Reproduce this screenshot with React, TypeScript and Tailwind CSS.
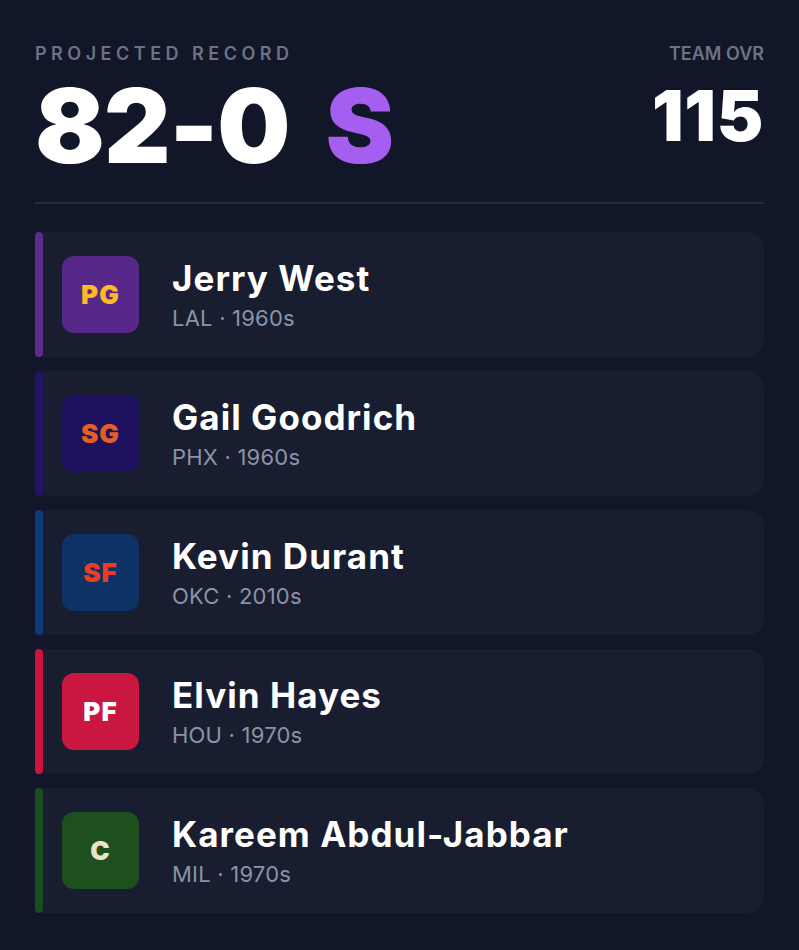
import React from 'react'

interface Player {
  pos: string
  name: string
  team: string
  era: string
  bar: string
  badgeBg: string
  badgeText: string
}

const players: Player[] = [
  { pos: 'PG', name: 'Jerry West', team: 'LAL', era: '1960s', bar: 'bg-[#5b2a8c]', badgeBg: 'bg-[#57288a]', badgeText: 'text-[#fdb927]' },
  { pos: 'SG', name: 'Gail Goodrich', team: 'PHX', era: '1960s', bar: 'bg-[#221466]', badgeBg: 'bg-[#1d1160]', badgeText: 'text-[#e56020]' },
  { pos: 'SF', name: 'Kevin Durant', team: 'OKC', era: '2010s', bar: 'bg-[#0d3a78]', badgeBg: 'bg-[#0c3266]', badgeText: 'text-[#ef3b24]' },
  { pos: 'PF', name: 'Elvin Hayes', team: 'HOU', era: '1970s', bar: 'bg-[#ce1141]', badgeBg: 'bg-[#c9173f]', badgeText: 'text-white' },
  { pos: 'C', name: 'Kareem Abdul-Jabbar', team: 'MIL', era: '1970s', bar: 'bg-[#1b4d1f]', badgeBg: 'bg-[#1e4f1f]', badgeText: 'text-[#eee1c6]' },
]

function PlayerRow({ p }: { p: Player }) {
  return (
    <div className="flex h-[125px]">
      {/* Team colour bar */}
      <div className={`w-[8px] rounded-full ${p.bar}`} />
      <div className="flex flex-1 items-center gap-[33px] rounded-r-2xl bg-[#181e30] pl-[19px]">
        <div
          className={`flex h-[77px] w-[77px] items-center justify-center rounded-xl text-[26px] font-black tracking-[0.04em] ${p.badgeBg} ${p.badgeText}`}
        >
          {p.pos}
        </div>
        <div className="flex flex-col">
          <span className="text-[35px] font-bold leading-[40px] tracking-[0.03em] text-white">{p.name}</span>
          <span className="mt-[6px] text-[22px] leading-[28px] tracking-[0.01em] text-[#8b93a7]">
            {p.team} · {p.era}
          </span>
        </div>
      </div>
    </div>
  )
}

export default function App() {
  return (
    <div className="min-h-[950px] w-[799px] bg-[#111628] px-[35px] pt-[42px] font-['Inter','Liberation_Sans',sans-serif]">
      {/* Header */}
      <div className="flex items-start justify-between">
        <div className="flex flex-col">
          <span className="text-[18px] font-semibold leading-[24px] tracking-[0.25em] text-[#6b7385]">
            PROJECTED RECORD
          </span>
          <div className="mt-[8px] flex text-[103px] font-black leading-none tracking-[-0.01em]">
            <span className="text-white">82-0</span>
            <span className="ml-[36px] text-[#a45ef0]">S</span>
          </div>
        </div>
        <div className="flex flex-col items-end">
          <span className="text-[18px] font-semibold leading-[24px] text-[#6b7385]">TEAM OVR</span>
          <span className="mt-[12px] text-[70px] font-black leading-[76px] tracking-[0.01em] text-white">115</span>
        </div>
      </div>

      <div className="mt-[25px] h-[2px] bg-[#252b3c]" />

      {/* Lineup */}
      <div className="mt-[28px] flex flex-col gap-[14px]">
        {players.map((p) => (
          <PlayerRow key={p.pos} p={p} />
        ))}
      </div>
    </div>
  )
}
